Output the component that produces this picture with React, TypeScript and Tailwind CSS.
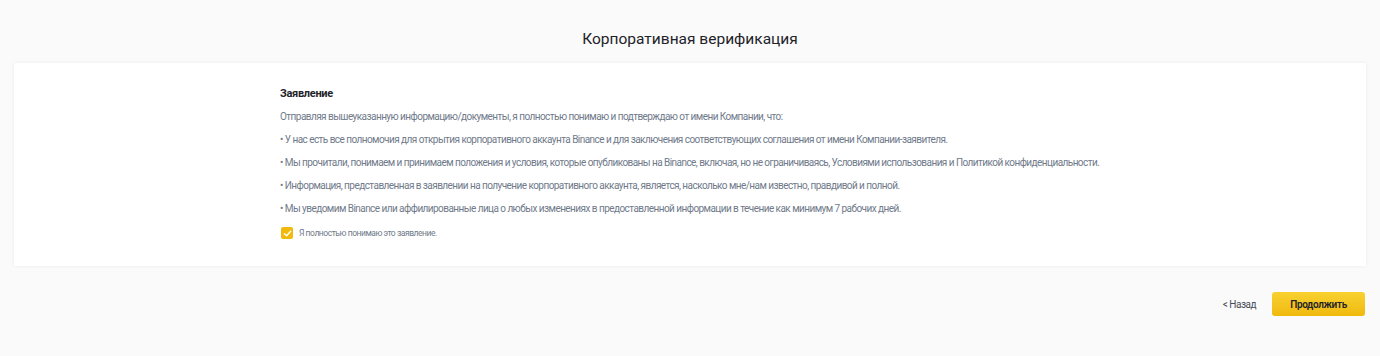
import { useState } from "react";

const points = [
  "• У нас есть все полномочия для открытия корпоративного аккаунта Binance и для заключения соответствующих соглашения от имени Компании-заявителя.",
  "• Мы прочитали, понимаем и принимаем положения и условия, которые опубликованы на Binance, включая, но не ограничиваясь, Условиями использования и Политикой конфиденциальности.",
  "• Информация, представленная в заявлении на получение корпоративного аккаунта, является, насколько мне/нам известно, правдивой и полной.",
  "• Мы уведомим Binance или аффилированные лица о любых изменениях в предоставленной информации в течение как минимум 7 рабочих дней.",
];

export default function App() {
  const [agreed, setAgreed] = useState(true);

  return (
    <div className="min-h-[356px] bg-[#fafafa] font-['Roboto',sans-serif] text-[#1e2329]">
      <h1 className="pt-[28px] text-center text-[15.5px] leading-[22px] font-normal">
        Корпоративная верификация
      </h1>

      <div className="mx-[14px] mt-[13px] rounded-[2px] bg-white shadow-[0_0_4px_rgba(0,0,0,0.06)]">
        <div className="mx-auto w-[820px] pt-[24px] pb-[27px]">
          <h2 className="text-[11px] leading-[14px] font-bold tracking-[-0.3px]">Заявление</h2>
          <div className="mt-[9px] flex flex-col gap-[9px] whitespace-nowrap text-[10px] leading-[14px] tracking-[-0.55px] text-[#707a8a]">
            <p>
              Отправляя вышеуказанную информацию/документы, я полностью понимаю и подтверждаю от имени Компании, что:
            </p>
            {points.map((p) => (
              <p key={p}>{p}</p>
            ))}
          </div>
          <label className="mt-[11px] flex h-[12px] cursor-pointer items-center gap-[6px] pl-[1px]">
            <span
              onClick={() => setAgreed(!agreed)}
              className={
                agreed
                  ? "flex h-[12px] w-[12px] items-center justify-center rounded-[2px] bg-[#f0b90b]"
                  : "flex h-[12px] w-[12px] items-center justify-center rounded-[2px] border border-[#b7bdc6] bg-white"
              }
            >
              {agreed && (
                <svg width="9" height="9" viewBox="0 0 10 10" fill="none">
                  <path d="M1.5 5.2 4 7.5 8.5 2.5" stroke="white" strokeWidth="1.5" strokeLinecap="round" strokeLinejoin="round" />
                </svg>
              )}
            </span>
            <span className="text-[8.5px] leading-[12px] tracking-[-0.45px] text-[#707a8a]">Я полностью понимаю это заявление.</span>
          </label>
        </div>
      </div>

      <div className="mt-[26px] flex items-center justify-end gap-[16px] pr-[15px]">
        <button className="text-[10px] tracking-[-0.5px] text-[#474d57]">&lt; Назад</button>
        <button className="h-[24px] w-[93px] rounded-[3px] bg-gradient-to-b from-[#f8d12f] to-[#f0b90b] text-[10px] font-semibold tracking-[-0.35px] text-[#1e2329]">
          Продолжить
        </button>
      </div>
    </div>
  );
}
